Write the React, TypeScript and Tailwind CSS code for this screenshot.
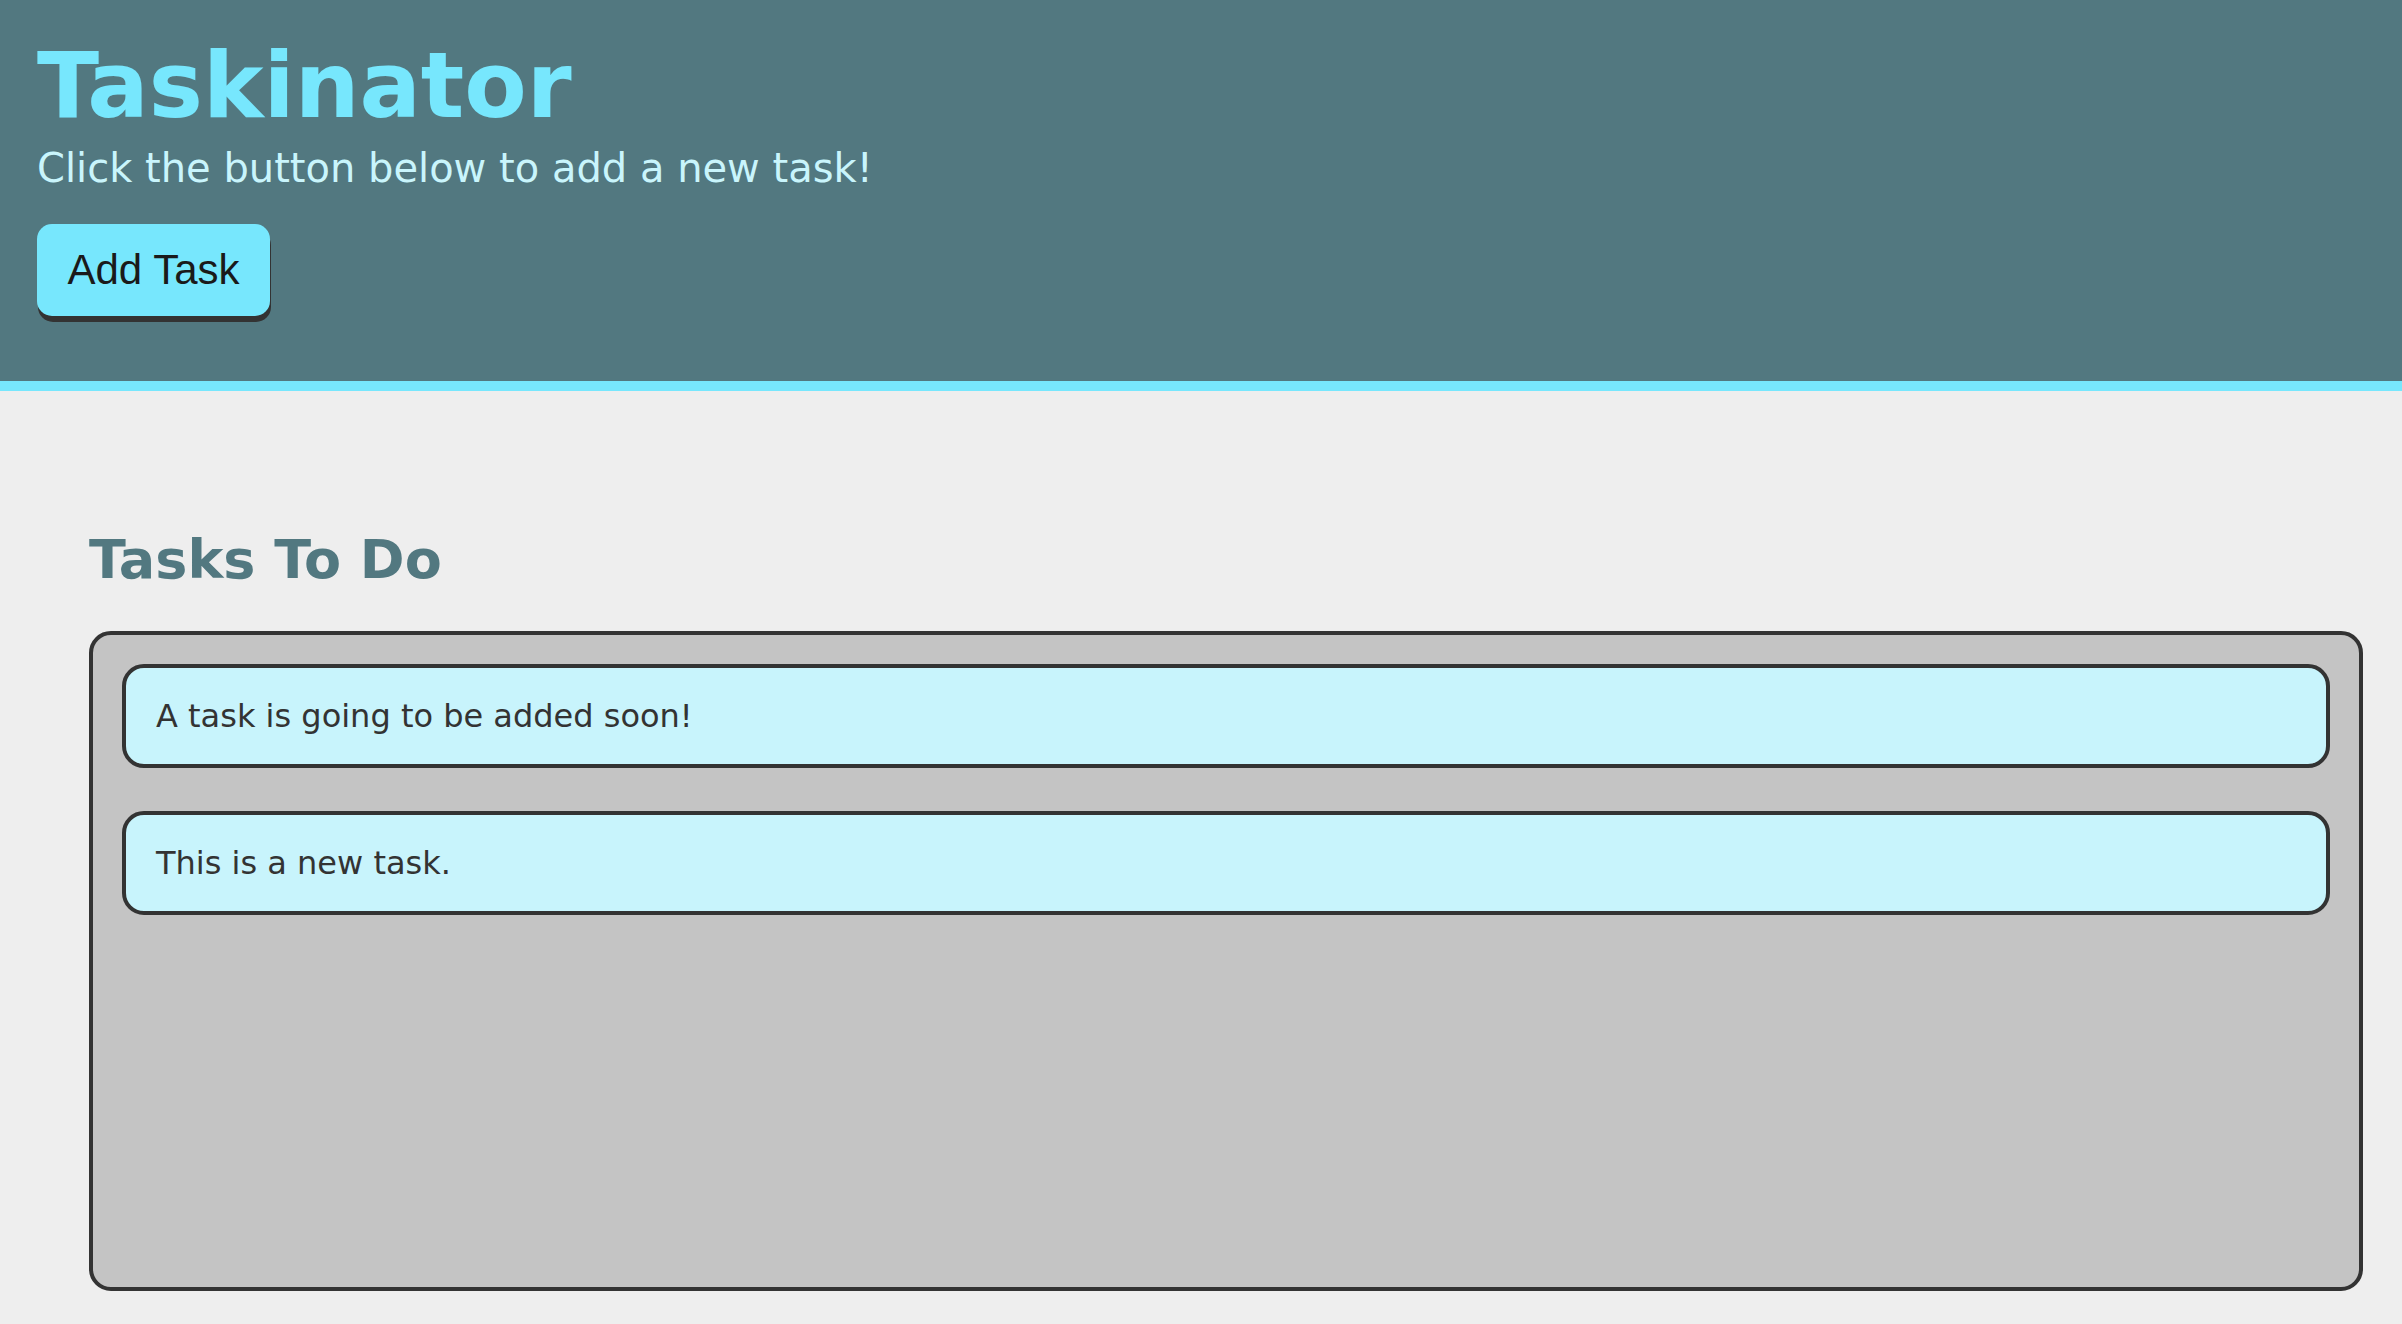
import React from 'react';

const tasks = ['A task is going to be added soon!', 'This is a new task.'];

export default function App() {
  return (
    <div className="min-h-[1324px] bg-[#eeeeee] font-['DejaVu_Sans',sans-serif]">
      {/* Header */}
      <header className="bg-[#527880] border-b-[10px] border-[#77e7fd] pl-[37px] pt-[40px] pb-[65px]">
        <h1 className="text-[91px] leading-none font-bold text-[#77e7fd]">Taskinator</h1>
        <p className="mt-[17px] text-[40px] leading-none text-[#c9f5fc]">
          Click the button below to add a new task!
        </p>
        <button className="mt-[36px] h-[92px] w-[233px] rounded-[15px] bg-[#77e7fd] text-[42px] leading-none text-[#1a1a1a] font-['Liberation_Sans',Arial,sans-serif] shadow-[1px_6px_0_#333333]">
          Add Task
        </button>
      </header>

      {/* Task list */}
      <main className="pl-[89px] pr-[39px] pt-[142px]">
        <h2 className="text-[54px] leading-none font-bold text-[#527880]">Tasks To Do</h2>
        <ul className="mt-[44px] h-[660px] rounded-[22px] border-4 border-[#333333] bg-[#c4c4c4] p-[29px] flex flex-col gap-[43px]">
          {tasks.map((task) => (
            <li
              key={task}
              className="rounded-[22px] border-4 border-[#333333] bg-[#c8f4fc] px-[30px] py-[29px] text-[32px] leading-[38px] text-[#333333]"
            >
              {task}
            </li>
          ))}
        </ul>
      </main>
    </div>
  );
}
